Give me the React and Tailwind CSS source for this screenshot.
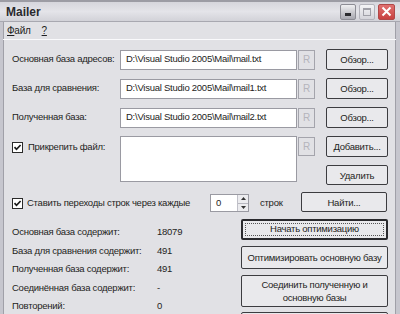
import React from "react";

function Check() {
  return (
    <div className="w-[11px] h-[11px] shrink-0 border border-[#2a2a2a] bg-white flex items-center justify-center">
      <svg width="9" height="9" viewBox="0 0 9 9">
        <path d="M1.5 4.2 L3.5 6.3 L7.6 2" fill="none" stroke="#1a1a1a" strokeWidth="1.7" />
      </svg>
    </div>
  );
}

function RBox({ h = "h-[20px]" }) {
  return (
    <div className={`w-[17px] ${h} shrink-0 ml-[1px] border border-[#a4a4ac] flex items-center justify-center text-[#b4b4bc] text-[10px]`}>
      R
    </div>
  );
}

function Btn({ children, cls = "" }) {
  return (
    <div className={`shrink-0 border border-[#3c3c40] rounded-[2px] bg-[#e9e9ec] flex items-center justify-center text-center leading-[13px] ${cls}`}>
      {children}
    </div>
  );
}

function PathRow({ label, value, mt }) {
  return (
    <div className={`flex items-center h-[21px] ${mt}`}>
      <div className="w-[108px] shrink-0 whitespace-nowrap">{label}</div>
      <div className="w-[177px] h-[20px] shrink-0 border border-[#9a9aa2] bg-white flex items-center pl-[5px] whitespace-nowrap overflow-hidden">{value}</div>
      <RBox />
      <Btn cls="ml-[11px] w-[62px] h-[21px]">Обзор...</Btn>
    </div>
  );
}

function Stat({ label, value }) {
  return (
    <div className="flex items-center h-[18.5px]">
      <div className="w-[145px] shrink-0 whitespace-nowrap">{label}</div>
      <div>{value}</div>
    </div>
  );
}

export default function App() {
  return (
    <div className="w-[400px] h-[314px] overflow-hidden bg-[#e1e1e5] font-['Liberation_Sans',Arial,sans-serif] text-[9.5px] tracking-[-0.25px] text-[#1e1e22] flex flex-col">
      {/* Title bar */}
      <div className="h-[22px] shrink-0 flex items-center border-t-[2px] border-[#9c9ca4] bg-gradient-to-b from-[#d6d6dc] via-[#e4e4e9] to-[#d2d2d8] border-b border-b-[#a8a8b0]">
        <div className="pl-[6px] font-bold text-[12px] tracking-normal text-[#2a2a2e] flex-1">Mailer</div>
        <div className="flex items-center gap-[3px] pr-[5px]">
          <div className="w-[16px] h-[16px] rounded-[2px] border border-[#8c8c94] bg-gradient-to-b from-[#f0f0f2] to-[#a8a8b0] flex items-end justify-center pb-[3px]">
            <div className="w-[6px] h-[3px] bg-[#2a2a2e]" />
          </div>
          <div className="w-[16px] h-[16px] rounded-[2px] border border-[#b4b4bc] bg-gradient-to-b from-[#f4f4f6] to-[#d4d4da] flex items-center justify-center">
            <div className="w-[8px] h-[8px] border border-[#a0a0a8] border-t-2" />
          </div>
          <div className="w-[17px] h-[16px] rounded-[2px] border border-[#b04848] bg-gradient-to-b from-[#e07070] to-[#c84040] flex items-center justify-center">
            <svg width="11" height="11" viewBox="0 0 11 11">
              <path d="M1.5 1.5 L9.5 9.5 M9.5 1.5 L1.5 9.5" stroke="#fff" strokeWidth="2" />
            </svg>
          </div>
        </div>
      </div>

      {/* Body with frame */}
      <div className="flex-1 flex flex-col border-l-[3px] border-r-[4px] border-[#c6c6ce] shadow-[inset_1px_0_0_#a0a0a8,inset_-1px_0_0_#a0a0a8]">
        {/* Menu */}
        <div className="h-[18px] shrink-0 flex items-center gap-[11px] pl-[4px] border-b border-[#fafafc] text-[10px]">
          <span><u>Ф</u>айл</span>
          <span><u>?</u></span>
        </div>

        <div className="pl-[9px] flex flex-col">
          <PathRow mt="mt-[9px]" label="Основная база адресов:" value="D:\Visual Studio 2005\Mail\mail.txt" />
          <PathRow mt="mt-[8px]" label="База для сравнения:" value="D:\Visual Studio 2005\Mail\mail1.txt" />
          <PathRow mt="mt-[8px]" label="Полученная база:" value="D:\Visual Studio 2005\Mail\mail2.txt" />

          {/* Attach */}
          <div className="flex items-start mt-[8px]">
            <div className="w-[108px] shrink-0 flex items-center gap-[5px] pt-[4px] whitespace-nowrap">
              <Check />
              <span>Прикрепить файл:</span>
            </div>
            <div className="w-[177px] h-[46px] shrink-0 border border-[#9a9aa2] bg-white" />
            <div className="mt-[1px]">
              <RBox h="h-[19px]" />
            </div>
            <div className="ml-[11px] flex flex-col">
              <Btn cls="w-[62px] h-[21px]">Добавить...</Btn>
              <Btn cls="w-[62px] h-[20px] mt-[8px]">Удалить</Btn>
            </div>
          </div>

          {/* Line breaks row */}
          <div className="flex items-center h-[20px] mt-[7px]">
            <div className="w-[198px] shrink-0 flex items-center gap-[4px] pt-[2px]">
              <Check />
              <span className="whitespace-nowrap">Ставить переходы строк через каждые</span>
            </div>
            <div className="w-[39px] h-[18px] shrink-0 border border-[#9a9aa2] bg-white flex items-center mt-[2px]">
              <span className="flex-1 pl-[5px]">0</span>
              <div className="w-[11px] h-full flex flex-col border-l border-[#c0c0c8]">
                <div className="flex-1 bg-[#ececef] border-b border-[#b8b8c0] flex items-center justify-center">
                  <svg width="5" height="3" viewBox="0 0 5 3"><path d="M0 3 L2.5 0 L5 3Z" fill="#333" /></svg>
                </div>
                <div className="flex-1 bg-[#ececef] flex items-center justify-center">
                  <svg width="5" height="3" viewBox="0 0 5 3"><path d="M0 0 L2.5 3 L5 0Z" fill="#333" /></svg>
                </div>
              </div>
            </div>
            <div className="w-[52px] shrink-0 pl-[11px] pt-[3px]">строк</div>
            <Btn cls="w-[86px] h-[20px]">Найти...</Btn>
          </div>

          {/* Stats + actions */}
          <div className="flex items-start mt-[7px]">
            <div className="w-[229px] shrink-0 flex flex-col pt-[4px]">
              <Stat label="Основная база содержит:" value="18079" />
              <Stat label="База для сравнения содержит:" value="491" />
              <Stat label="Полученная база содержит:" value="491" />
              <Stat label="Соединённая база содержит:" value="-" />
              <Stat label="Повторений:" value="0" />
            </div>
            <div className="flex flex-col">
              <div className="w-[147px] h-[21px] shrink-0 border-2 border-[#2a2a2e] rounded-[2px] bg-[#e9e9ec] p-[2px]">
                <div className="w-full h-full border border-dotted border-[#555] flex items-center justify-center">Начать оптимизацию</div>
              </div>
              <Btn cls="w-[147px] h-[23px] mt-[6px] whitespace-nowrap">Оптимизировать основную базу</Btn>
              <Btn cls="w-[147px] h-[32px] mt-[6px] px-[14px]">Соединить полученную и основную базы</Btn>
              <Btn cls="w-[147px] h-[20px] mt-[5px]"> </Btn>
            </div>
          </div>
        </div>
      </div>
    </div>
  );
}
